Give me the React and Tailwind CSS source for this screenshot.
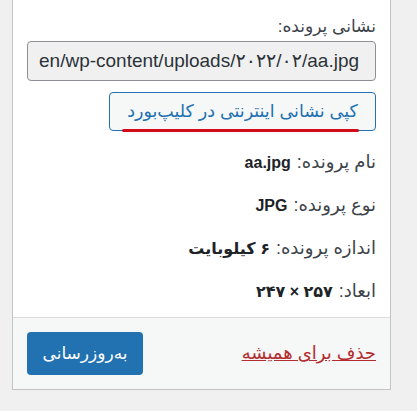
import React from "react";

const rows = [
  { label: "نام پرونده:", value: "aa.jpg", latin: true },
  { label: "نوع پرونده:", value: "JPG", latin: true },
  { label: "اندازه پرونده:", value: "۶ کیلوبایت" },
  { label: "ابعاد:", value: "۲۵۷ × ۲۴۷" },
];

function App() {
  return (
    <div
      className="w-[417px] h-[411px] bg-[#f0f0f1] pl-[12px] overflow-hidden"
      style={{ fontFamily: '"Liberation Sans", "DejaVu Sans", sans-serif' }}
    >
      <div
        dir="rtl"
        className="w-[379px] h-[390px] bg-white border-x border-b border-[#c3c4c7] flex flex-col"
      >
        <div className="flex-1 px-[14px] pt-[16px]">
          <div className="text-[17px] leading-[22px] text-[#3c434a]">نشانی پرونده:</div>
          <div className="mt-[3px] h-[40px] rounded-[4px] border border-[#8c8f94] bg-[#f0f0f1] flex items-center justify-end overflow-hidden px-[11px] text-[19px] text-[#2c3338]">
            <span dir="ltr" className="whitespace-nowrap">en/wp-content/uploads/۲۰۲۲/۰۲/aa.jpg</span>
          </div>
          <div className="mt-[11px] flex justify-start">
            <div className="relative">
              <button className="h-[39px] w-[267px] rounded-[4px] border border-[#2271b1] bg-[#f6f7f7] text-[#2271b1] text-[17.5px] px-[8px]">
                کپی نشانی اینترنتی در کلیپ‌بورد
              </button>
              <div className="absolute left-[13px] right-[17px] bottom-[-1px] h-[3px] rounded-full bg-[#d10b1a]" />
            </div>
          </div>
          <div className="mt-[10px] flex flex-col">
            {rows.map((r) => (
              <div key={r.label} className="h-[43px] flex items-center text-[18px] text-[#3c434a]">
                <span>{r.label}</span>
                <span
                  className={
                    r.latin
                      ? "mr-[6px] font-bold text-[16px] text-[#1d2327]"
                      : "mr-[6px] font-bold text-[16px] text-[#1d2327]"
                  }
                >
                  {r.value}
                </span>
              </div>
            ))}
          </div>
        </div>
        <div className="h-[72px] border-t border-[#dcdcde] bg-[#f6f7f7] px-[14px] flex items-center justify-between">
          <a href="#" className="text-[#b32d2e] underline text-[18px]">حذف برای همیشه</a>
          <button className="h-[43px] w-[116px] rounded-[4px] bg-[#2271b1] text-white text-[17px]">
            به‌روزرسانی
          </button>
        </div>
      </div>
    </div>
  );
}

export default App;
